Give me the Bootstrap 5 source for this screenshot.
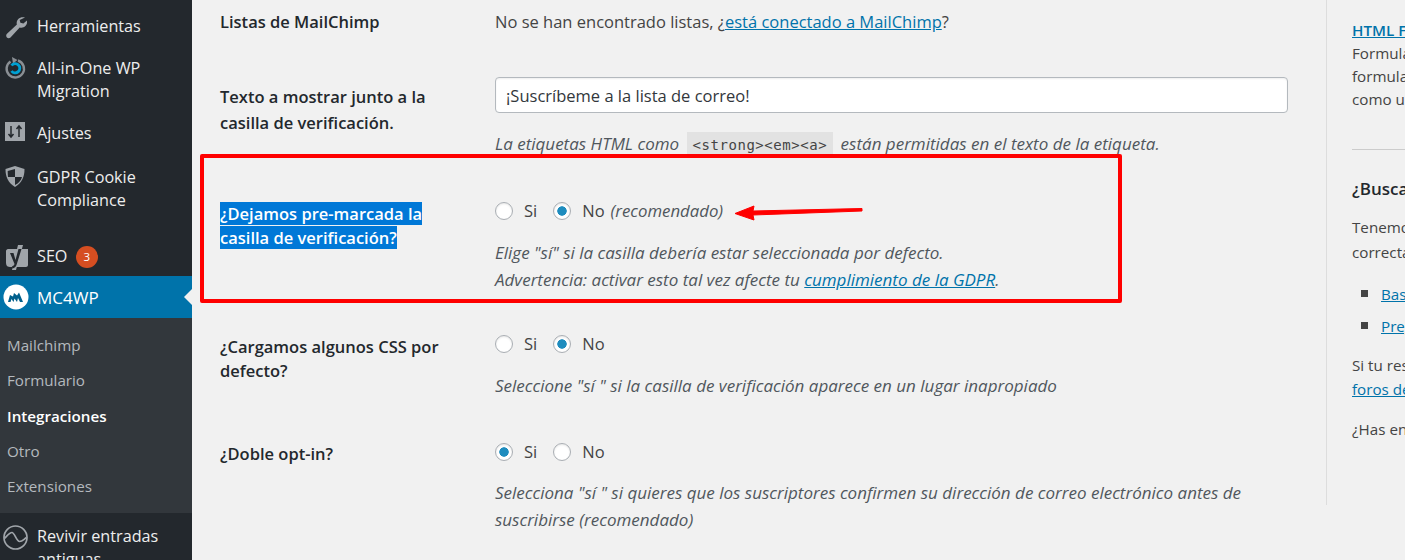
<!DOCTYPE html>
<html lang="es">
<head>
<meta charset="utf-8">
<title>MC4WP</title>
<link href="https://cdn.jsdelivr.net/npm/bootstrap@5.3.0/dist/css/bootstrap.min.css" rel="stylesheet">
<style>
html,body{height:560px;overflow:hidden}
body{background:#f1f1f1;color:#444;font-family:"Open Sans","Noto Sans",sans-serif;font-size:16.5px;line-height:24px;position:relative}
a{color:#0073aa}
.shell{height:560px;width:1405px}
.wpside{width:192px;height:560px;background:#23282d;color:#eee;overflow:hidden;flex:none;padding-top:15px;font-size:16.2px}
.wpitem{display:flex;padding-right:6px;line-height:23px;margin-bottom:16px}
.wpitem svg{flex:none;width:26px;height:26px;margin-left:3px;margin-right:8px}
.wpcount{display:inline-block;width:22px;height:22px;border-radius:50%;background:#d54e21;color:#fff;font-size:11.5px;line-height:22px;text-align:center;margin-left:4px;vertical-align:1px}
.wpactive{background:#0073aa;color:#fff;height:42px;align-items:center;margin:0;position:relative;font-size:17px}
.wpactive::after{content:"";position:absolute;right:0;top:13px;border:8px solid transparent;border-right-color:#f1f1f1;border-left:0}
.wpsub{background:#32373c;color:#b4b9be;height:195px;padding:10px 0 0 7px;margin-bottom:12px;font-size:15.2px}
.wpsub div{height:35.25px;line-height:35.25px}
.wpsub .cur{color:#fff;font-weight:600}
.wpmain{width:1134px;padding:0 0 0 28px;flex:none}
.wpform{padding-top:10px}
.frow{display:flex;margin-bottom:43px}
.flab{width:275px;flex:none;font-weight:600;color:#23282d;padding-right:30px}
.fctl{width:793px;flex:none}
.fdesc{font-style:italic;color:#50575d;margin:0;font-size:17px}
.lh27{line-height:27px}
.txtin{display:block;width:793px;height:36px;border:1px solid #b4b9be;border-radius:4px;background:#fff;color:#32373c;padding:0 10px;font:inherit;box-shadow:inset 0 1px 2px rgba(0,0,0,.07)}
.fcode{background:#e2e2e2;color:#444;font-family:"DejaVu Sans Mono",monospace;font-style:normal;font-size:14px;letter-spacing:.55px;line-height:1;padding:5px 6px;margin:0 3px}
.sel{background:#0078d7;color:#fff}
.radline{display:flex;align-items:center;height:24px}
.radline .form-check-input{width:18px;height:18px;margin:0 11px 0 0;border:1px solid #a9aeb3;background-color:#fff;box-shadow:inset 0 1px 2px rgba(0,0,0,.1);flex:none}
.radline .form-check-input:checked{background-image:radial-gradient(circle,#1e8cbe 0 4.4px,transparent 5px);background-color:#fff;border-color:#a9aeb3}
.radline label{margin-right:16px}
.radline em{color:#50575d;margin-left:-10px;font-size:16.8px}
.wpaside{width:200px;height:505px;border-left:1px solid #ddd;margin-left:38px;padding:18px 0 0 25px;flex:none;white-space:nowrap;font-size:15.2px}
.wpaside hr{margin:38px 0 27px;border-top:1px solid #ccc;opacity:1}
.wpaside h4{font-size:17px;font-weight:600;line-height:24px;margin:0 0 14px;color:#23282d}
.wpaside ul{list-style:square;margin:16px 0 15px;padding-left:29px}
.wpaside li{margin-bottom:7px}
.wpaside li::marker{color:#444;font-size:19px}
.wpnote{margin-top:16px}
.boxmark{position:absolute;left:200px;top:154px;width:922px;height:149px;border:4px solid #f00;border-radius:2px;pointer-events:none}
.arrowmark{position:absolute;left:730px;top:200px;width:136px;height:26px}
</style>
</head>
<body>
<div class="shell d-flex">
  <nav class="wpside">
    <div class="wpitem"><svg viewBox="0 0 26 26"><path fill="#a0a5aa" d="M22 2.500c-2.400-.8-5-.3-6.700 1.400-1.500 1.500-2 3.700-1.400 5.700L4 18.800c-1 1-1.100 2.700-.1 3.700s2.700.9 3.600-.1l9.200-9.900c2 .6 4.200 .1 5.700-1.400 1.500-1.500 2-3.600 1.500-5.600l-3.500 3-3-.7-.7-2.900z"/></svg><span>Herramientas</span></div>
    <div class="wpitem" style="margin-bottom:19px"><svg viewBox="0 0 26 26"><path fill="none" stroke="#8a8f94" stroke-width="2.400" d="M7.500 4.500a8.700 8.700 0 1 0 7.500-1"/><path fill="#8a8f94" d="M9 0l5.500 3-4.500 3.500z"/><path fill="none" stroke="#00a0d2" stroke-width="2.800" d="M8.500 8.500a4.600 4.600 0 1 1 0 5.500"/></svg><span>All-in-One WP<br>Migration</span></div>
    <div class="wpitem" style="margin-bottom:18px"><svg viewBox="0 0 26 26"><path fill="#a0a5aa" d="M2 0h20v19H2z"/><path fill="none" stroke="#23282d" stroke-width="1.500" d="M8 4v11M16 4v11M5.500 12l2.500 3 2.500-3M13.500 7l2.500-3 2.500 3"/></svg><span>Ajustes</span></div>
    <div class="wpitem" style="margin-bottom:33px"><svg viewBox="0 0 26 26"><path fill="#a0a5aa" d="M12 0l9.500 3c0 8-2.500 13.500-9.500 18C5 16.500 2.500 11 2.500 3z"/><path fill="#23282d" d="M12 3v8H5c-.2-2-.3-3.800-.3-6zM12 11h7c-1 3.500-3 6-7 8z"/></svg><span>GDPR Cookie<br>Compliance</span></div>
    <div class="wpitem" style="margin-bottom:5px"><svg viewBox="0 0 26 26"><path fill="#a0a5aa" d="M5 4h20v16c0 1-1 2-2 2H7c-2 0-4-1-4-4V6c0-1 1-2 2-2z"/><path fill="#a0a5aa" d="M15 0h5l-7 25H9z"/><path fill="#23282d" d="M7 8h3.500l2 7 3-11h3l-5 16c-.6 2-2 3-4 3.500l-.6-2c1.500-.5 2.300-1.200 2.600-2.500z"/></svg><span>SEO <b class="wpcount fw-normal">3</b></span></div>
    <div class="wpitem wpactive"><svg viewBox="0 0 26 26"><circle cx="13" cy="13" r="12.500" fill="#fff"/><path fill="#005f8c" d="M5 18l2-7 3 1.500 1-3.500 3 2.500 2-3 4 9.500h-3l-2-4-1 4-2.500-3.500-1 3.500-2-3-1 3z"/></svg><span>MC4WP</span></div>
    <div class="wpsub"><div>Mailchimp</div><div>Formulario</div><div class="cur">Integraciones</div><div>Otro</div><div>Extensiones</div></div>
    <div class="wpitem"><svg viewBox="0 0 26 26"><circle cx="12.500" cy="12.500" r="11.500" fill="none" stroke="#a0a5aa" stroke-width="1.700"/><path fill="none" stroke="#a0a5aa" stroke-width="1.700" d="M1.500 13.500c3-3 5-6 7.500-6s4.500 9 7.500 9 4-2 7-4"/></svg><span>Revivir entradas<br>antiguas</span></div>
  </nav>
  <main class="wpmain d-flex">
    <div class="wpform">
      <div class="frow">
        <div class="flab">Listas de MailChimp</div>
        <div class="fctl">No se han encontrado listas, ¿<a href="#">está conectado a MailChimp</a>?</div>
      </div>
      <div class="frow">
        <div class="flab" style="padding-top:7px;line-height:26px">Texto a mostrar junto a la casilla de verificación.</div>
        <div class="fctl">
          <input class="txtin" type="text" value="¡Suscríbeme a la lista de correo!">
          <p class="fdesc" style="margin-top:19px">La etiquetas HTML como <code class="fcode">&lt;strong&gt;&lt;em&gt;&lt;a&gt;</code> están permitidas en el texto de la etiqueta.</p>
        </div>
      </div>
      <div class="frow" style="margin-bottom:39px">
        <div class="flab" style="padding-top:3px"><span class="sel">¿Dejamos pre-marcada la casilla de verificación?</span></div>
        <div class="fctl">
          <div class="radline"><input class="form-check-input" type="radio" name="a" id="a1"><label for="a1">Si</label><input class="form-check-input" type="radio" name="a" id="a2" checked><label for="a2">No</label><em>(recomendado)</em></div>
          <p class="fdesc lh27" style="margin-top:16px">Elige "sí" si la casilla debería estar seleccionada por defecto.<br>Advertencia: activar esto tal vez afecte tu <a href="#">cumplimiento de la GDPR</a>.</p>
        </div>
      </div>
      <div class="frow" style="margin-bottom:42px">
        <div class="flab" style="padding-top:3px">¿Cargamos algunos CSS por defecto?</div>
        <div class="fctl">
          <div class="radline"><input class="form-check-input" type="radio" name="b" id="b1"><label for="b1">Si</label><input class="form-check-input" type="radio" name="b" id="b2" checked><label for="b2">No</label></div>
          <p class="fdesc" style="margin-top:18px">Seleccione "sí " si la casilla de verificación aparece en un lugar inapropiado</p>
        </div>
      </div>
      <div class="frow">
        <div class="flab" style="padding-top:2px">¿Doble opt-in?</div>
        <div class="fctl">
          <div class="radline"><input class="form-check-input" type="radio" name="c" id="c1" checked><label for="c1">Si</label><input class="form-check-input" type="radio" name="c" id="c2"><label for="c2">No</label></div>
          <p class="fdesc lh27" style="margin-top:15px">Selecciona "sí " si quieres que los suscriptores confirmen su dirección de correo electrónico antes de suscribirse (recomendado)</p>
        </div>
      </div>
    </div>
    <aside class="wpaside">
      <div><a href="#" class="fw-semibold">HTML Forms</a></div>
      <div style="line-height:23px">Formularios<br>formularios<br>como un</div>
      <hr>
      <h4>¿Buscas ayuda?</h4>
      <div style="line-height:25px">Tenemos<br>correctamente</div>
      <ul><li><a href="#">Base</a></li><li><a href="#">Preguntas</a></li></ul>
      <div>Si tu respuesta<br><a href="#">foros de</a></div>
      <div class="wpnote">¿Has encontrado</div>
    </aside>
  </main>
</div>
<div class="boxmark"></div>
<svg class="arrowmark" viewBox="0 0 136 26"><path fill="#f00" stroke="#f00" d="M5 13.500 L24 6 L23 11 L132 8.500 L132 11 L23 15 L24 20z"/></svg>
</body>
</html>
